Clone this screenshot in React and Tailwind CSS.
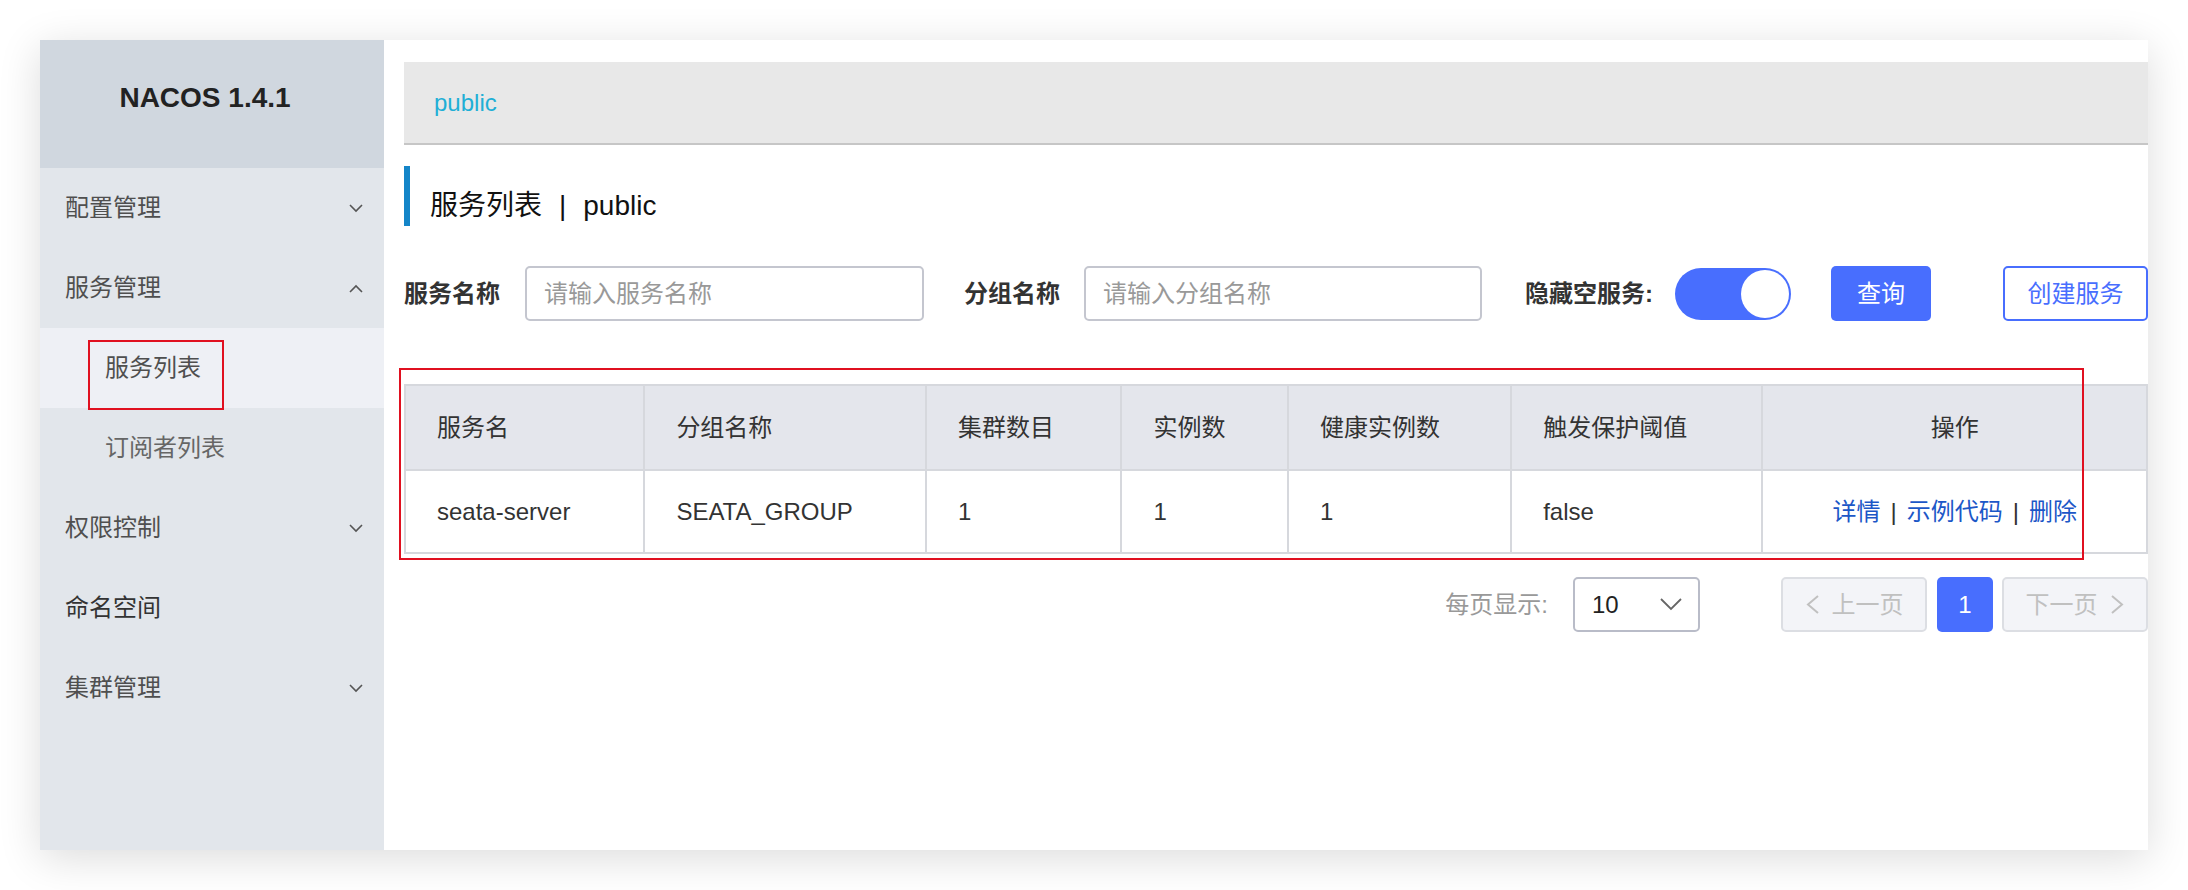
import React, { useState } from 'react';

const MENU = [
  { name: '配置管理', arrow: 'down' },
  { name: '服务管理', arrow: 'up', children: ['服务列表', '订阅者列表'] },
  { name: '权限控制', arrow: 'down' },
  { name: '命名空间', arrow: null, dark: true },
  { name: '集群管理', arrow: 'down' },
];

const COLS = [
  { key: 'name', label: '服务名', w: 240 },
  { key: 'group', label: '分组名称', w: 282 },
  { key: 'clusters', label: '集群数目', w: 196 },
  { key: 'ips', label: '实例数', w: 167 },
  { key: 'healthy', label: '健康实例数', w: 224 },
  { key: 'threshold', label: '触发保护阈值', w: 252 },
  { key: 'ops', label: '操作', w: 386 },
];

const ROWS = [
  { name: 'seata-server', group: 'SEATA_GROUP', clusters: 1, ips: 1, healthy: 1, threshold: 'false' },
];

function Chevron({ dir = 'down', className = '' }) {
  const points = dir === 'up' ? '1,8 7,2 13,8' : '1,1 7,7 13,1';
  return (
    <svg width="14" height="9" viewBox="0 0 14 9" className={className}>
      <polyline points={points} fill="none" stroke="#555" strokeWidth="1.6" />
    </svg>
  );
}

function Sidebar() {
  return (
    <aside className="relative w-[344px] shrink-0 bg-[#e2e6eb]">
      <div className="flex h-[128px] items-center justify-center bg-[#d0d7df] pb-[12px] pr-[14px] text-[28px] font-bold text-[#222]">
        NACOS 1.4.1
      </div>
      {MENU.map(item => (
        <div key={item.name}>
          <div className="flex h-[80px] items-center justify-between pl-[25px] pr-[21px]">
            <span className={'text-[24px] ' + (item.dark ? 'text-[#333]' : 'text-[#4f4f4f]')}>{item.name}</span>
            {item.arrow && <Chevron dir={item.arrow} />}
          </div>
          {item.children && item.children.map((c, i) => (
            <div
              key={c}
              className={'flex h-[80px] items-center pl-[65px] text-[24px] ' + (i === 0 ? 'bg-[#eef0f5] text-[#4f4f4f]' : 'text-[#666]')}
            >
              {c}
            </div>
          ))}
        </div>
      ))}
      {/* 标注框 */}
      <div className="absolute left-[48px] top-[300px] h-[70px] w-[136px] border-2 border-[#e01020]" />
    </aside>
  );
}

function Switch({ on, onChange }) {
  return (
    <button
      onClick={() => onChange(!on)}
      className="flex h-[52px] w-[116px] items-center justify-end rounded-full bg-[#486efe] p-[2px]"
    >
      <span className="h-[48px] w-[48px] rounded-full bg-white" />
    </button>
  );
}

function App() {
  const [hideEmpty, setHideEmpty] = useState(true);

  return (
    <div className="min-h-screen bg-white p-10 font-['Liberation_Sans','Noto_Sans_CJK_SC',sans-serif]">
      <div className="flex h-[810px] bg-white shadow-[0_8px_40px_rgba(0,0,0,0.14)]">
        <Sidebar />

        <main className="min-w-0 flex-1 overflow-hidden pl-5 pt-[22px]">
          <div className="flex h-[83px] items-center border-b-2 border-[#c6c6c6] bg-[#e8e8e8] pl-[30px]">
            <span className="text-[24px] text-[#1fafd6]">public</span>
          </div>

          <div className="mt-[21px] flex h-[60px] border-l-[6px] border-[#1485c8] pl-[20px] pt-[26px] text-[28px] leading-none text-[#111]">
            <span>服务列表</span>
            <span className="mx-[17px]">|</span>
            <span>public</span>
          </div>

          <div className="mt-[40px] flex h-[55px] items-center">
            <span className="w-[96px] text-[24px] font-bold text-[#333]">服务名称</span>
            <input
              placeholder="请输入服务名称"
              className="ml-[25px] h-[55px] w-[399px] rounded-[5px] border-2 border-[#c4c6cf] px-[17px] text-[24px] text-[#333] outline-none placeholder:text-[#999]"
            />
            <span className="ml-[40px] w-[96px] text-[24px] font-bold text-[#333]">分组名称</span>
            <input
              placeholder="请输入分组名称"
              className="ml-[24px] h-[55px] w-[398px] rounded-[5px] border-2 border-[#c4c6cf] px-[17px] text-[24px] text-[#333] outline-none placeholder:text-[#999]"
            />
            <span className="ml-[43px] w-[127px] whitespace-nowrap text-[24px] font-bold text-[#333]">隐藏空服务:</span>
            <div className="ml-[23px]">
              <Switch on={hideEmpty} onChange={setHideEmpty} />
            </div>
            <button className="ml-[40px] h-[55px] w-[100px] shrink-0 rounded-[5px] bg-[#486efe] text-[24px] text-white">查询</button>
            <button className="ml-[72px] h-[55px] w-[145px] shrink-0 rounded-[5px] border-2 border-[#486efe] bg-white text-[24px] text-[#486efe]">创建服务</button>
          </div>

          <div className="relative mt-[63px]">
            <table className="table-fixed border-collapse text-[24px] text-[#333]">
              <colgroup>
                {COLS.map(c => <col key={c.key} style={{ width: c.w }} />)}
              </colgroup>
              <thead>
                <tr className="h-[85px] bg-[#e4e6ec]">
                  {COLS.map(c => (
                    <th
                      key={c.key}
                      className={'border-2 border-[#d6d8dd] font-normal ' + (c.key === 'ops' ? 'text-center' : 'pl-[31px] text-left')}
                    >
                      {c.label}
                    </th>
                  ))}
                </tr>
              </thead>
              <tbody>
                {ROWS.map(r => (
                  <tr key={r.name} className="h-[83px]">
                    {COLS.map(c => (
                      <td key={c.key} className={'border-2 border-[#d6d8dd] ' + (c.key === 'ops' ? 'text-center' : 'pl-[31px]')}>
                        {c.key === 'ops' ? (
                          <span className="text-[#1c57c7]">
                            <a>详情</a>
                            <span className="mx-[10px] text-[#333]">|</span>
                            <a>示例代码</a>
                            <span className="mx-[10px] text-[#333]">|</span>
                            <a>删除</a>
                          </span>
                        ) : r[c.key]}
                      </td>
                    ))}
                  </tr>
                ))}
              </tbody>
            </table>
            {/* 标注框 */}
            <div className="pointer-events-none absolute left-[-5px] top-[-16px] h-[192px] w-[1685px] border-2 border-[#e01020]" />
          </div>

          <div className="mt-[23px] flex h-[55px] items-center justify-end">
            <span className="text-[24px] text-[#999]">每页显示:</span>
            <div className="ml-[25px] flex h-[55px] w-[127px] items-center justify-between rounded-[5px] border-2 border-[#b9bcc8] pl-[17px] pr-[16px]">
              <span className="text-[24px] text-[#222]">10</span>
              <svg width="22" height="13" viewBox="0 0 22 13">
                <polyline points="1,1 11,11 21,1" fill="none" stroke="#666" strokeWidth="1.8" />
              </svg>
            </div>
            <button className="ml-[81px] flex h-[55px] w-[146px] items-center justify-center gap-[12px] rounded-[5px] border-2 border-[#dcdee3] bg-[#f3f4f8] text-[24px] text-[#c0c0c0]">
              <svg width="15" height="19" viewBox="0 0 15 19">
                <polyline points="13,1 3,9.5 13,18" fill="none" stroke="#c0c0c0" strokeWidth="2" />
              </svg>
              上一页
            </button>
            <button className="ml-[10px] h-[55px] w-[56px] rounded-[5px] bg-[#486efe] text-[24px] text-white">1</button>
            <button className="ml-[9px] flex h-[55px] w-[146px] items-center justify-center gap-[12px] rounded-[5px] border-2 border-[#dcdee3] bg-[#f3f4f8] text-[24px] text-[#c0c0c0]">
              下一页
              <svg width="15" height="19" viewBox="0 0 15 19">
                <polyline points="2,1 12,9.5 2,18" fill="none" stroke="#c0c0c0" strokeWidth="2" />
              </svg>
            </button>
          </div>
        </main>
      </div>
    </div>
  );
}

export default App;
